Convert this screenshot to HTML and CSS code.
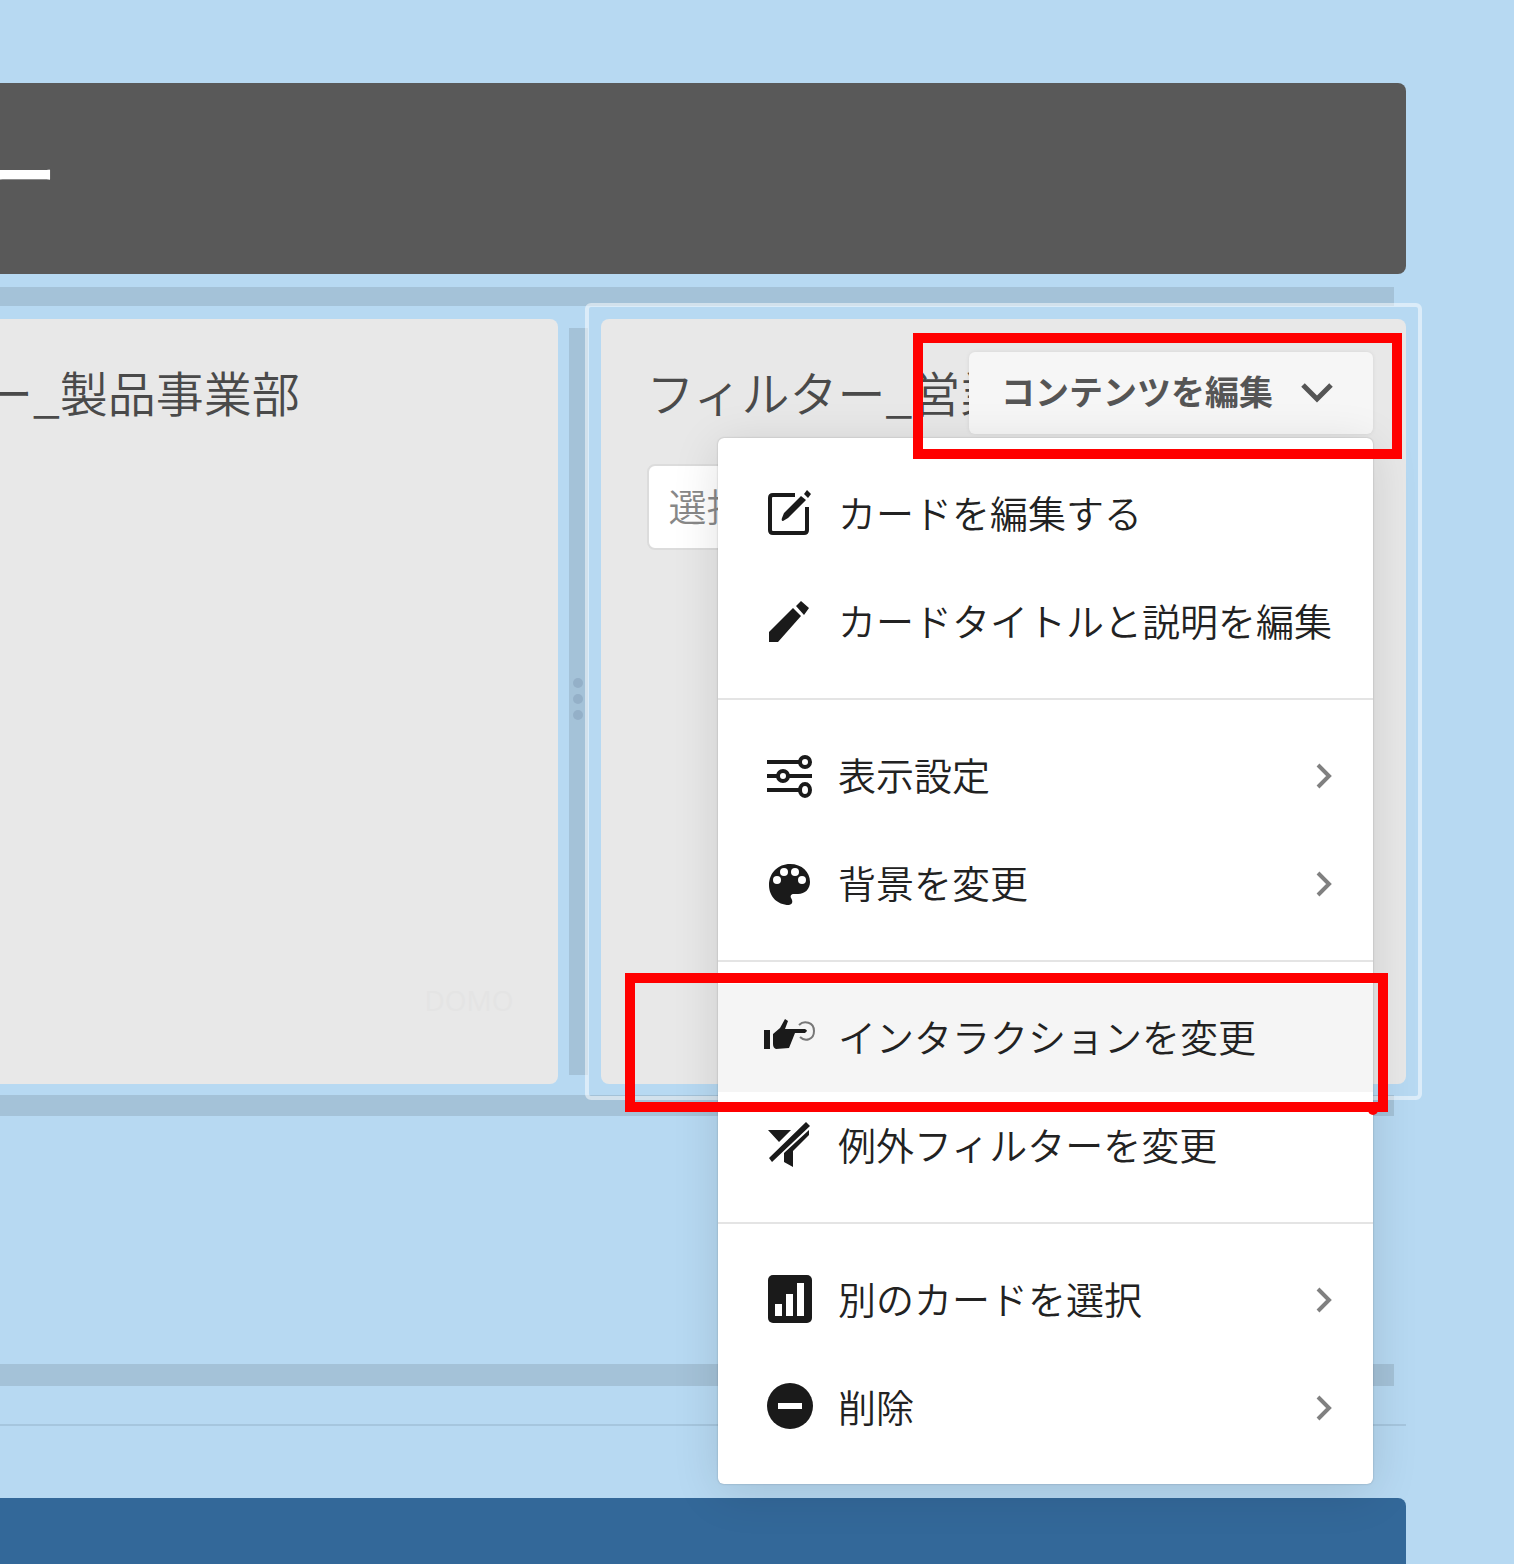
FILE: index.html
```html
<!DOCTYPE html>
<html lang="ja">
<head>
<meta charset="utf-8">
<meta name="viewport" content="width=device-width, initial-scale=1">
<title>フィルター</title>
<link rel="stylesheet" href="styles.css">
</head>
<body>
<main class="canvas">
  <header class="banner"><h1 class="banner-title">ー</h1></header>
  <div class="drop-bar drop-bar-top"></div>

  <div class="card-row">
    <section class="card">
      <h2 class="card-title">フィルター_製品事業部</h2>
      <span class="watermark">DOMO</span>
    </section>

    <div class="resizer"><i class="dot"></i><i class="dot"></i><i class="dot"></i></div>

    <section class="card card-selected">
      <h2 class="card-title">フィルター_営業</h2>
      <input class="filter-input" type="text" placeholder="選択" aria-label="フィルター_営業">

      <div class="actions">
        <button class="edit-button" type="button" aria-expanded="true">
          <span class="edit-label">コンテンツを編集</span>
          <svg class="caret" viewBox="0 0 32 20" aria-hidden="true"><path d="M2 2l14 14L30 2"/></svg>
        </button>

        <div class="menu">
          <div class="menu-group">
            <button class="menu-item" type="button">
              <svg class="icon" viewBox="0 0 48 48" aria-hidden="true"><path class="line" d="M29 5H7q-3 0-3 3v32q0 3 3 3h31q3 0 3-3V17"/><path d="M16 28l2-5L35 6l5 4-18 18-5 3q-2 0-1-3zM38 4l3-4 4 4-3 4z"/></svg>
              <span class="label">カードを編集する</span>
            </button>
            <button class="menu-item" type="button">
              <svg class="icon" viewBox="0 0 48 48" aria-hidden="true"><path d="M3 44v-10l24-24 8 8-23 26zM30 8l5-5 8 7-5 7z"/></svg>
              <span class="label">カードタイトルと説明を編集</span>
            </button>
          </div>
          <div class="menu-group">
            <button class="menu-item" type="button">
              <svg class="icon" viewBox="0 0 48 48" aria-hidden="true"><path class="line" d="M1 10h33M1 24h11M22 24h24M1 38h33"/><circle class="line" cx="39" cy="10" r="5"/><circle class="line" cx="17" cy="24" r="5"/><ellipse class="line" cx="39" cy="38" rx="5" ry="6"/></svg>
              <span class="label">表示設定</span>
              <svg class="arrow" viewBox="0 0 18 28" aria-hidden="true"><path d="M3 3l11 11L3 25"/></svg>
            </button>
            <button class="menu-item" type="button">
              <svg class="icon" viewBox="0 0 48 48" aria-hidden="true"><path d="M24 4c12 0 20 8 20 18 0 7-5 12-12 12h-4c-3 0-4 2-3 4 2 3 2 6-2 7C11 45 3 36 3 25 3 13 12 4 24 4z"/><g class="hole"><circle cx="18" cy="12" r="4"/><circle cx="29" cy="12" r="4"/><circle cx="11" cy="20" r="4"/><circle cx="36" cy="20" r="4"/></g></svg>
              <span class="label">背景を変更</span>
              <svg class="arrow" viewBox="0 0 18 28" aria-hidden="true"><path d="M3 3l11 11L3 25"/></svg>
            </button>
          </div>
          <div class="menu-group">
            <button class="menu-item menu-item-active" type="button">
              <svg class="icon" viewBox="0 0 48 48" aria-hidden="true"><path d="M-2 16h6v19h-6zM7 20l7-6 5-9 3 2-3 8h20q2 1 2 2l-2 2H29l-6 15-13 1q-3-1-3-5z"/><path class="thin" d="M33 11c5-5 15-3 15 6s-9 11-14 6"/></svg>
              <span class="label">インタラクションを変更</span>
            </button>
            <button class="menu-item" type="button">
              <svg class="icon" viewBox="0 0 48 48" aria-hidden="true"><path d="M2 8h23L13 20zM40 0l4 4L6 40l-3-4zM43 8v5L27 29v16l-9-5V31z"/></svg>
              <span class="label">例外フィルターを変更</span>
            </button>
          </div>
          <div class="menu-group">
            <button class="menu-item" type="button">
              <svg class="icon" viewBox="0 0 48 48" aria-hidden="true"><rect x="2" y="-1" width="44" height="48" rx="5"/><path class="hole" d="M9 28h7v12H9zM20 18h7v22h-7zM31 7h7v33h-7z"/></svg>
              <span class="label">別のカードを選択</span>
              <svg class="arrow" viewBox="0 0 18 28" aria-hidden="true"><path d="M3 3l11 11L3 25"/></svg>
            </button>
            <button class="menu-item" type="button">
              <svg class="icon" viewBox="0 0 48 48" aria-hidden="true"><circle cx="24" cy="22" r="23"/><path class="hole" d="M12 19h24v6H12z"/></svg>
              <span class="label">削除</span>
              <svg class="arrow" viewBox="0 0 18 28" aria-hidden="true"><path d="M3 3l11 11L3 25"/></svg>
            </button>
          </div>
        </div>
      </div>
      <div class="callout callout-button"></div>
      <div class="callout callout-item"></div>
    </section>
  </div>

  <div class="drop-bar drop-bar-middle"></div>
  <div class="drop-bar drop-bar-bottom"></div>
  <hr class="page-rule">
  <section class="blue-section"></section>
</main>
</body>
</html>
```
FILE: styles.css
```css
* { box-sizing: border-box; }

body {
  margin: 0;
  background: #b7d9f2;
  color: #4a4a4a;
  font-family: "Noto Sans CJK JP", "Noto Sans", sans-serif;
  font-weight: 350;
}

.canvas {
  display: flex;
  flex-direction: column;
  height: 100vh;
  padding: 83px 108px 0 0;
  overflow: hidden;
}

.canvas > * {
  flex-shrink: 0;
  margin-left: -248px;
}

.banner {
  display: flex;
  align-items: center;
  height: 191px;
  padding: 0 0 16px 240px;
  border-radius: 8px;
  background: #595959;
}

.banner-title {
  margin: 0;
  color: #fff;
  font-size: 64px;
  font-weight: 700;
  line-height: 80px;
}

.drop-bar {
  margin-right: 12px;
  background: #a4c2d8;
}

.drop-bar-top { height: 19px; margin-top: 13px; margin-bottom: 13px; }
.drop-bar-middle { height: 21px; margin-top: 11px; }
.drop-bar-bottom { height: 22px; margin-top: 248px; }

.card-row {
  display: grid;
  grid-template-columns: 1fr 43px 1fr;
  min-height: 765px;
}

.card {
  position: relative;
  display: flex;
  flex-direction: column;
  min-width: 0;
  padding: 40px 44px 64px 46px;
  border-radius: 8px;
  background: #e8e8e8;
}

.card-selected { z-index: 1; }

.card-selected::before {
  content: "";
  position: absolute;
  inset: -16px;
  border: 4px solid rgba(255, 255, 255, 0.5);
  border-radius: 6px;
  pointer-events: none;
}

.card-title {
  margin: 0;
  font-size: 48px;
  font-weight: 350;
  line-height: 64px;
  white-space: nowrap;
}

.card:first-child { padding-left: 42px; }

.watermark {
  align-self: flex-end;
  margin-top: auto;
  color: #e4e4e4;
  font-family: "Open Sans", sans-serif;
  font-size: 28px;
  font-weight: 400;
  line-height: 40px;
}

.resizer {
  display: flex;
  flex-direction: column;
  align-items: center;
  justify-content: center;
  gap: 6px;
  margin: 9px 13px 9px 11px;
  padding-bottom: 6px;
  background: #a4c2d8;
}

.dot {
  width: 10px;
  height: 10px;
  border-radius: 50%;
  background: #94b0c8;
}

.filter-input {
  width: 100%;
  height: 86px;
  margin-top: 41px;
  padding: 0 20px 6px;
  border: 2px solid #dcdcdc;
  border-radius: 8px;
  background: #fff;
  font: inherit;
  font-size: 38px;
}

.filter-input::placeholder { color: #888; opacity: 1; }

.actions {
  position: absolute;
  top: 33px;
  right: 33px;
  display: flex;
  flex-direction: column;
  align-items: flex-end;
  gap: 4px;
}

.edit-button {
  display: flex;
  align-items: center;
  gap: 28px;
  height: 82px;
  padding: 0 40px 0 32px;
  border: 0;
  border-radius: 6px;
  background: #f6f6f6;
  box-shadow: 0 0 4px rgba(0, 0, 0, 0.08);
  color: #555;
  font: inherit;
  font-size: 34px;
  font-weight: 700;
  white-space: nowrap;
}

.edit-label { padding-bottom: 6px; }

.caret { width: 32px; height: 20px; }
.caret path { fill: none; stroke: #555; stroke-width: 5; }

.menu {
  width: 655px;
  border-radius: 6px;
  background: #fff;
  box-shadow: 0 0 2px rgba(0, 0, 0, 0.25), 0 8px 48px rgba(0, 0, 0, 0.12);
}

.menu-group {
  padding: 22px 0;
  border-bottom: 2px solid #e4e4e4;
}

.menu-group:last-child { border-bottom: 0; }

.menu-item {
  display: flex;
  align-items: center;
  gap: 24px;
  width: 100%;
  height: 108px;
  padding: 0 40px 0 48px;
  border: 0;
  background: none;
  color: #222;
  font: inherit;
  font-size: 38px;
  text-align: left;
  white-space: nowrap;
}

.menu-item-active { background: #f5f5f5; }

.icon {
  flex: none;
  width: 48px;
  height: 48px;
  fill: #1a1a1a;
  overflow: visible;
}

.icon .line { fill: none; stroke: #1a1a1a; stroke-width: 4; }
.icon .thin { fill: none; stroke: #777; stroke-width: 2; }
.icon .hole { fill: #fff; }

.label { flex: 1; min-width: 0; padding-bottom: 6px; }

.arrow { flex: none; width: 18px; height: 28px; }
.arrow path { fill: none; stroke: #808080; stroke-width: 4; }

.callout {
  position: absolute;
  border: 10px solid #f00;
  pointer-events: none;
}

.callout-button { top: 14px; right: 4px; width: 489px; height: 126px; }
.callout-item { top: 654px; right: 18px; width: 763px; height: 139px; }

.callout-item::after {
  content: "";
  position: absolute;
  right: 0;
  bottom: -13px;
  width: 10px;
  height: 10px;
  border-radius: 50%;
  background: #f00;
}

.page-rule {
  width: auto;
  height: 2px;
  margin-top: 38px;
  margin-right: 0;
  margin-bottom: 72px;
  border: 0;
  background: #a6c6de;
}

.blue-section {
  flex: 1 0 66px;
  border-radius: 8px 8px 0 0;
  background: #336899;
}
```
